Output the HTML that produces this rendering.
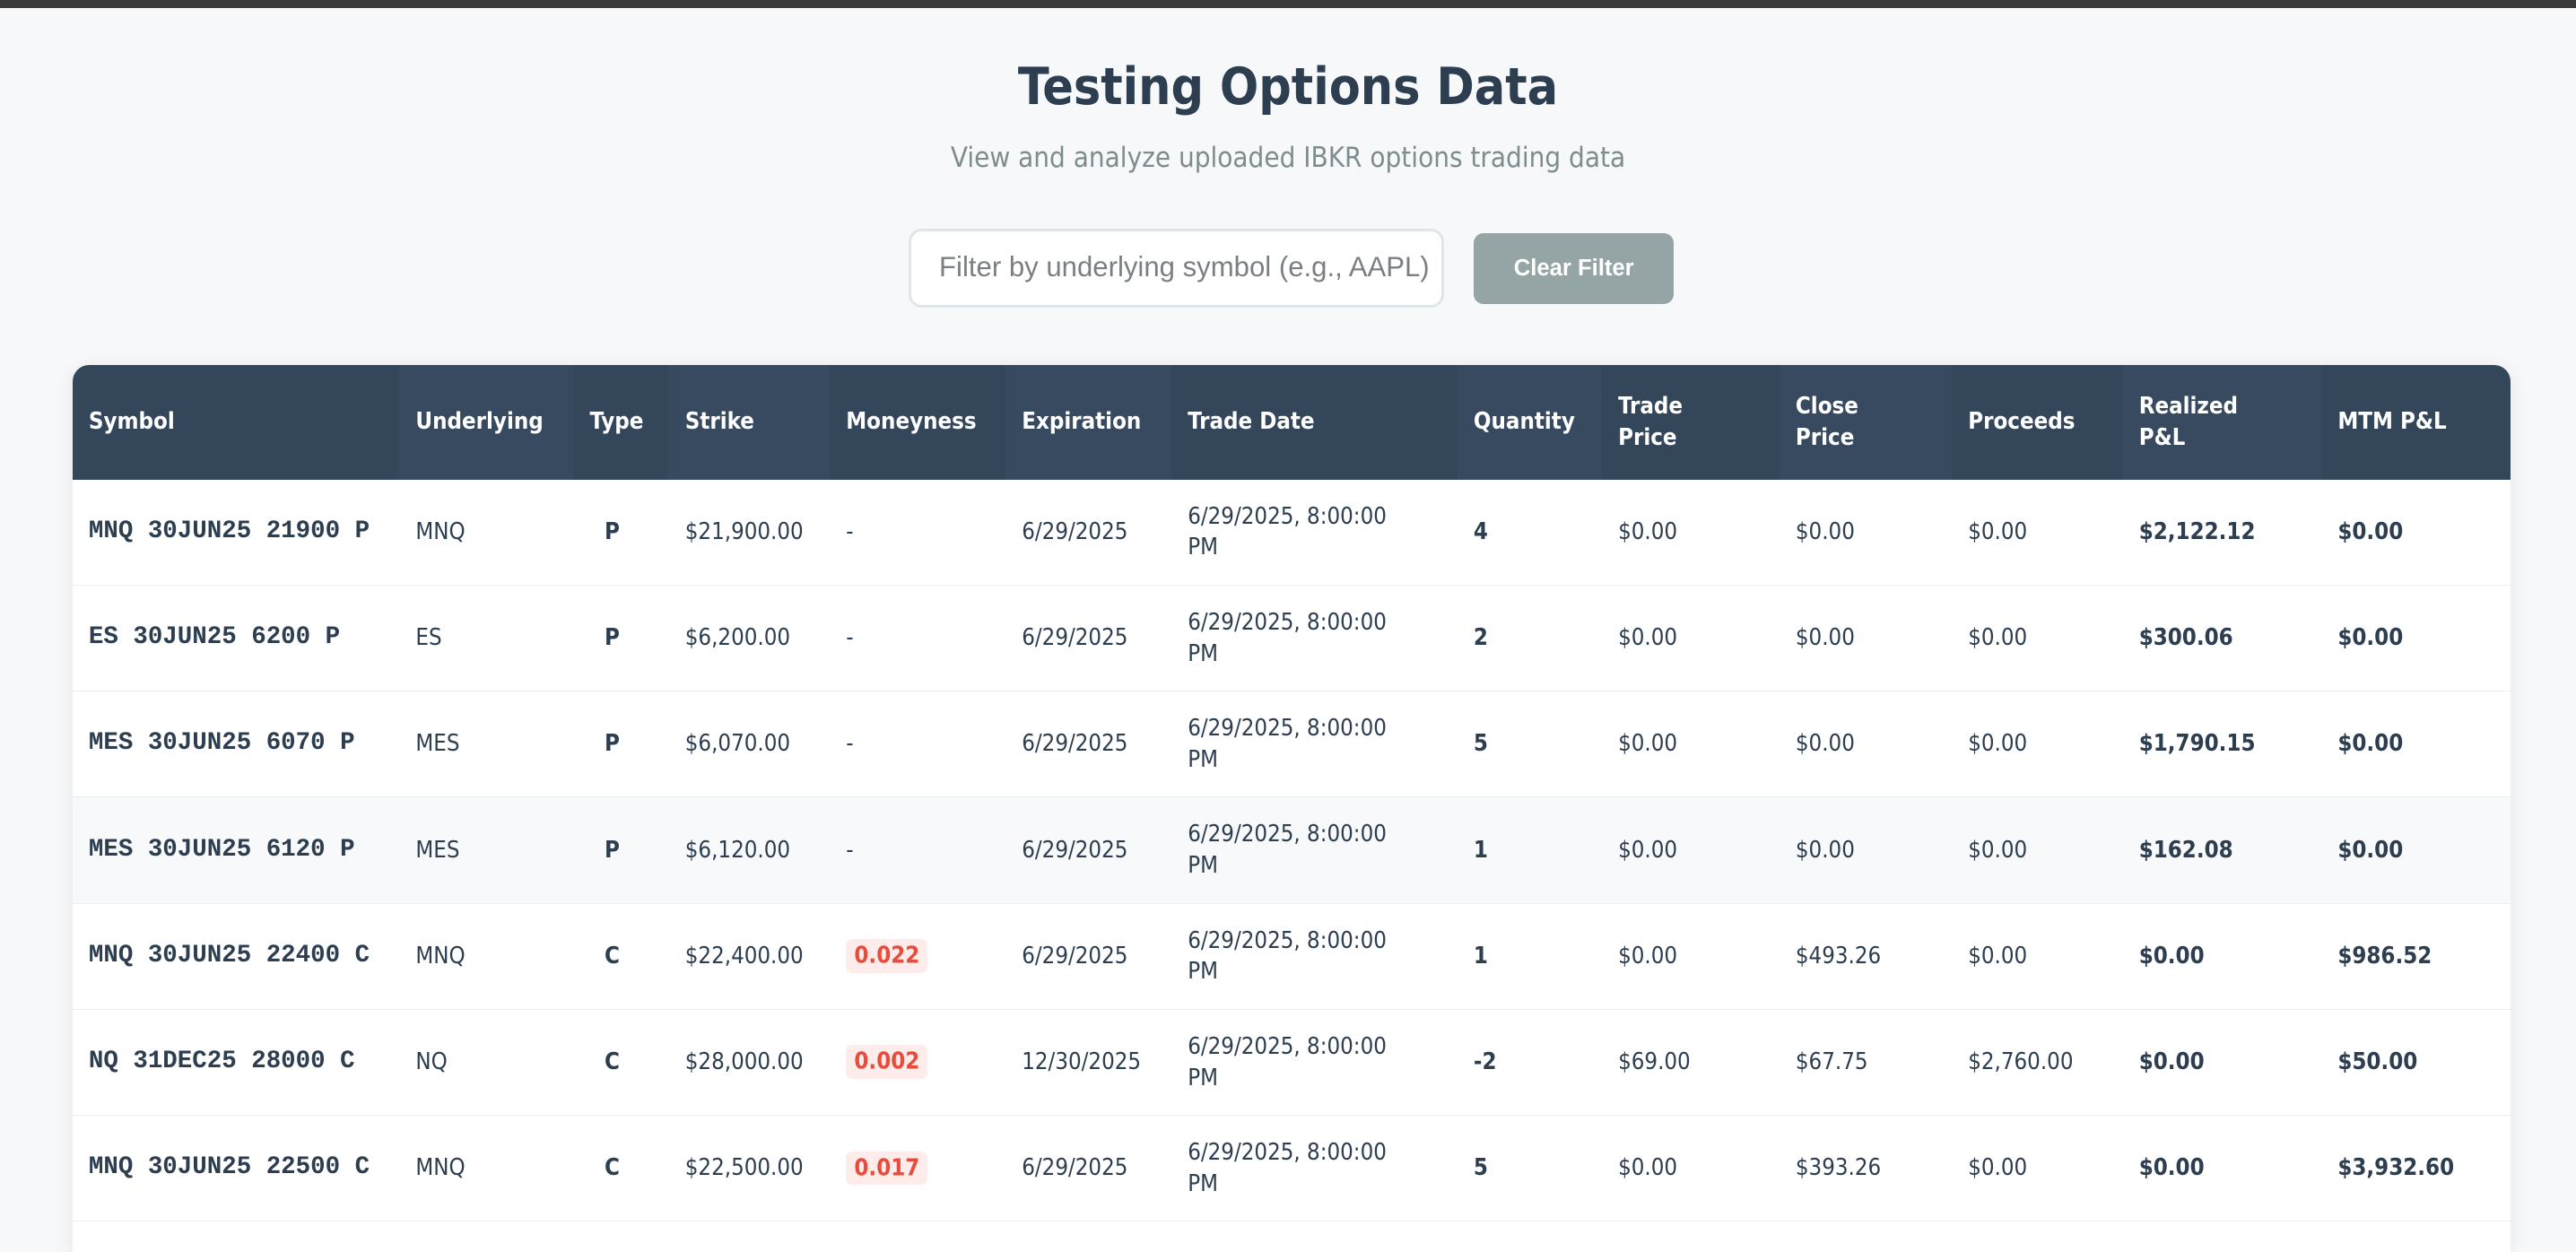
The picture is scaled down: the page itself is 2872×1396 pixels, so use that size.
<!DOCTYPE html>
<html><head><meta charset="utf-8"><style>
html,body{margin:0;padding:0}
body{width:1568px;height:757px;overflow:hidden;zoom:1.83163;background:#f7f8fa;font-family:"DejaVu Sans Condensed","Liberation Sans",sans-serif;color:#2c3e50;position:relative}
.bar{height:5px;background:#3a3a3a}
h1{position:absolute;top:35px;left:0;width:1568px;text-align:center;margin:0;font-size:31px;font-weight:bold;color:#2c3e50}
.sub{position:absolute;top:86px;left:0;width:1568px;text-align:center;font-size:17px;color:#7f8c8d}
.inp{position:absolute;left:553px;top:139px;border:2px solid #dfe6e9;border-radius:8px;background:#fff;font-size:17px;color:#7b7f83;line-height:44px;padding-left:17px;box-sizing:border-box;width:326px;height:48px;white-space:nowrap;overflow:hidden;font-family:"Liberation Sans",sans-serif}
.btn{position:absolute;left:897px;top:142px;width:122px;height:43px;background:#95a5a6;color:#fff;border-radius:6px;font-size:14px;font-weight:bold;text-align:center;line-height:43px;font-family:"Liberation Sans",sans-serif}
.wrap{position:absolute;left:44px;top:222px;width:1484px;height:540px;background:#fff;border-radius:10px 10px 0 0;overflow:hidden;box-shadow:0 2px 12px rgba(0,0,0,.08)}
table{border-collapse:collapse;table-layout:fixed;width:1484px;font-size:14px}
th{background:#34465a;color:#fff;text-align:left;font-weight:bold;height:70px;padding:0 10px;line-height:19px;font-size:14px}
th:nth-child(even){background:#374a5f}
td{height:64px;border-bottom:1px solid #eceff1;padding:0 10px;line-height:19px;vertical-align:middle}
tr.s td{background:#f8f9fa}
.m{font-family:"Liberation Mono",monospace;font-weight:bold;font-size:15px;white-space:nowrap}
.b{font-weight:bold}
.c{text-align:left;padding-left:19px}
.bd{background:#fdecea;color:#e74c3c;font-weight:bold;padding:2px 5px;border-radius:4px}
</style></head><body>
<div class="bar"></div>
<h1>Testing Options Data</h1>
<div class="sub">View and analyze uploaded IBKR options trading data</div>
<div class="inp">Filter by underlying symbol (e.g., AAPL)</div>
<div class="btn">Clear Filter</div>
<div class="wrap"><table>
<colgroup><col style="width:199px"><col style="width:106px"><col style="width:58px"><col style="width:98px"><col style="width:107px"><col style="width:101px"><col style="width:174px"><col style="width:88px"><col style="width:108px"><col style="width:105px"><col style="width:104px"><col style="width:121px"><col style="width:115px"></colgroup>
<tr><th>Symbol</th><th>Underlying</th><th>Type</th><th>Strike</th><th>Moneyness</th><th>Expiration</th><th>Trade Date</th><th>Quantity</th><th>Trade<br>Price</th><th>Close<br>Price</th><th>Proceeds</th><th>Realized<br>P&amp;L</th><th>MTM P&amp;L</th></tr>
<tr><td class="m">MNQ 30JUN25 21900 P</td><td>MNQ</td><td class="b c">P</td><td>$21,900.00</td><td>-</td><td>6/29/2025</td><td>6/29/2025, 8:00:00<br>PM</td><td class="b">4</td><td>$0.00</td><td>$0.00</td><td>$0.00</td><td class="b">$2,122.12</td><td class="b">$0.00</td></tr>
<tr><td class="m">ES 30JUN25 6200 P</td><td>ES</td><td class="b c">P</td><td>$6,200.00</td><td>-</td><td>6/29/2025</td><td>6/29/2025, 8:00:00<br>PM</td><td class="b">2</td><td>$0.00</td><td>$0.00</td><td>$0.00</td><td class="b">$300.06</td><td class="b">$0.00</td></tr>
<tr><td class="m">MES 30JUN25 6070 P</td><td>MES</td><td class="b c">P</td><td>$6,070.00</td><td>-</td><td>6/29/2025</td><td>6/29/2025, 8:00:00<br>PM</td><td class="b">5</td><td>$0.00</td><td>$0.00</td><td>$0.00</td><td class="b">$1,790.15</td><td class="b">$0.00</td></tr>
<tr class="s"><td class="m">MES 30JUN25 6120 P</td><td>MES</td><td class="b c">P</td><td>$6,120.00</td><td>-</td><td>6/29/2025</td><td>6/29/2025, 8:00:00<br>PM</td><td class="b">1</td><td>$0.00</td><td>$0.00</td><td>$0.00</td><td class="b">$162.08</td><td class="b">$0.00</td></tr>
<tr><td class="m">MNQ 30JUN25 22400 C</td><td>MNQ</td><td class="b c">C</td><td>$22,400.00</td><td><span class="bd">0.022</span></td><td>6/29/2025</td><td>6/29/2025, 8:00:00<br>PM</td><td class="b">1</td><td>$0.00</td><td>$493.26</td><td>$0.00</td><td class="b">$0.00</td><td class="b">$986.52</td></tr>
<tr><td class="m">NQ 31DEC25 28000 C</td><td>NQ</td><td class="b c">C</td><td>$28,000.00</td><td><span class="bd">0.002</span></td><td>12/30/2025</td><td>6/29/2025, 8:00:00<br>PM</td><td class="b">-2</td><td>$69.00</td><td>$67.75</td><td>$2,760.00</td><td class="b">$0.00</td><td class="b">$50.00</td></tr>
<tr><td class="m">MNQ 30JUN25 22500 C</td><td>MNQ</td><td class="b c">C</td><td>$22,500.00</td><td><span class="bd">0.017</span></td><td>6/29/2025</td><td>6/29/2025, 8:00:00<br>PM</td><td class="b">5</td><td>$0.00</td><td>$393.26</td><td>$0.00</td><td class="b">$0.00</td><td class="b">$3,932.60</td></tr>
<tr><td></td><td></td><td></td><td></td><td></td><td></td><td></td><td></td><td></td><td></td><td></td><td></td><td></td></tr>
</table></div>
</body></html>
